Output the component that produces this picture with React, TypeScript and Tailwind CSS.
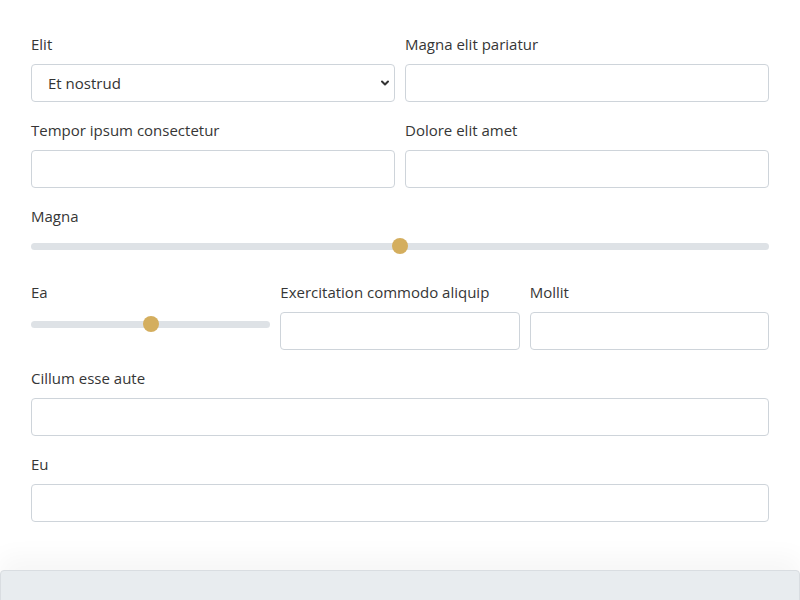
import { ChevronDown } from 'lucide-react';

function Label({ children }: { children: React.ReactNode }) {
  return <label className="block mb-[10px] text-[15px] leading-[20px] text-[#363636]">{children}</label>;
}

function TextInput() {
  return (
    <input
      type="text"
      className="block w-full h-[38px] rounded-[4px] border border-[#ced4da] bg-white px-4 text-[15px] text-[#333] outline-none"
    />
  );
}

function Slider({ value }: { value: number }) {
  return (
    <div className="relative h-5 flex items-center">
      <div className="w-full h-[7px] rounded-full bg-[#dee2e6]" />
      <div
        className="absolute top-1/2 h-4 w-4 -translate-x-1/2 -translate-y-1/2 rounded-full bg-[#d4ae5e]"
        style={{ left: `${value}%` }}
      />
    </div>
  );
}

export default function App() {
  return (
    <div className="relative w-[800px] h-[600px] overflow-hidden bg-white font-['Segoe_UI','Open_Sans',sans-serif]">
      <div className="px-[31px] pt-[34px] flex flex-col gap-[18px]">
        <div className="grid grid-cols-2 gap-x-[10px]">
          <div>
            <Label>Elit</Label>
            <div className="relative">
              <select className="block w-full h-[38px] appearance-none rounded-[4px] border border-[#ced4da] bg-white px-4 text-[15px] text-[#333] outline-none">
                <option>Et nostrud</option>
              </select>
              <ChevronDown className="absolute right-[4px] top-1/2 -translate-y-1/2 w-3 h-3 text-[#333]" strokeWidth={4} />
            </div>
          </div>
          <div>
            <Label>Magna elit pariatur</Label>
            <TextInput />
          </div>
        </div>

        <div className="grid grid-cols-2 gap-x-[10px]">
          <div>
            <Label>Tempor ipsum consectetur</Label>
            <TextInput />
          </div>
          <div>
            <Label>Dolore elit amet</Label>
            <TextInput />
          </div>
        </div>

        <div className="mb-2">
          <Label>Magna</Label>
          <Slider value={50} />
        </div>

        <div className="grid grid-cols-3 gap-x-[10px]">
          <div>
            <Label>Ea</Label>
            <div className="pt-[2px]">
              <Slider value={50} />
            </div>
          </div>
          <div>
            <Label>Exercitation commodo aliquip</Label>
            <TextInput />
          </div>
          <div>
            <Label>Mollit</Label>
            <TextInput />
          </div>
        </div>

        <div>
          <Label>Cillum esse aute</Label>
          <TextInput />
        </div>

        <div>
          <Label>Eu</Label>
          <TextInput />
        </div>
      </div>

      {/* bottom bar */}
      <div className="absolute left-0 right-0 top-[570px] h-[40px] rounded-t-[4px] border border-[#d9dde1] bg-[#e8ecef] shadow-[0_-14px_24px_rgba(0,0,0,0.035)]" />
    </div>
  );
}
